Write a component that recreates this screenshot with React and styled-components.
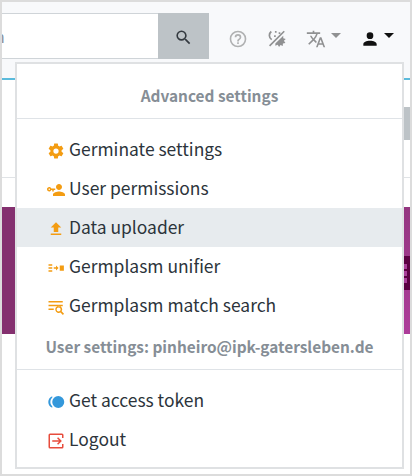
import React from "react";
import styled, { createGlobalStyle } from "styled-components";

const Global = createGlobalStyle`
  *{box-sizing:border-box}
  body{margin:0;background:#fff;font-family:"Noto Sans CJK SC","Noto Sans",sans-serif;color:#2c343b}
`;
const Frame = styled.div`
  position:relative;width:412px;height:476px;overflow:hidden;background:#fff;
  border:2px solid #dcdcdc;display:flex;flex-direction:column;
`;
const TopBar = styled.header`
  flex:none;height:78px;background:#f8f9fb;border-bottom:2px solid #5bbbdc;
  display:flex;align-items:flex-start;padding-top:11px;
`;
const SearchField = styled.div`
  width:156px;height:46px;background:#fff;border:1px solid #cfd4d8;border-width:1px 0;
  display:flex;align-items:center;overflow:hidden;font-size:16px;color:#8b929b;
  span{margin-left:-7px}
`;
const SearchButton = styled.div`
  width:51px;height:46px;background:#bdc3c7;display:flex;align-items:center;justify-content:center;
  padding-top:3px;color:#343a40;
`;
const Tools = styled.nav`
  height:51px;display:flex;align-items:center;margin-left:19px;color:#909192;
`;
const Tool = styled.div`
  display:flex;align-items:center;width:${p => p.$w}px;color:${p => p.$color || "inherit"};
  svg{flex:none}
`;
const Caret = styled.i`
  border:5px solid transparent;border-top-color:currentColor;border-bottom:0;
  margin:0 0 7px ${p => p.$gap}px;
`;
const Subheader = styled.div`
  flex:none;height:98px;border-bottom:1px solid #e0e3e6;display:flex;justify-content:flex-end;padding-top:27px;
`;
const ScrollThumb = styled.div`width:7px;height:33px;background:#bdc3c7;`;
const Banner = styled.div`
  flex:none;height:127px;margin-top:29px;background:linear-gradient(90deg,#84306f 50%,transparent 50%),linear-gradient(#943680,#ad3c9a);
  display:flex;justify-content:flex-end;align-items:flex-start;padding-top:49px;
`;
const Badge = styled.div`
  width:8px;height:34px;background:#5b0042;display:flex;flex-direction:column;gap:2px;padding:8px 3px 0 0;
  i{height:5px;background:#a93f99}
`;
const Menu = styled.div`
  position:absolute;left:13px;top:60px;width:389px;height:407px;background:#fff;border:2px solid #dfe1e3;
  display:flex;flex-direction:column;
`;
const Heading = styled.div`
  height:${p => p.$h}px;display:flex;align-items:center;justify-content:center;
  padding:${p => p.$drop || 0}px 0 ${p => p.$lift || 0}px;
  font-size:15.4px;font-weight:700;color:#868e96;white-space:nowrap;
`;
const Divider = styled.div`height:1px;background:#dfe3e7;margin-bottom:${p => p.$gap}px;`;
const Item = styled.div`
  height:39px;display:flex;align-items:center;padding:0 0 2px 30px;background:${p => p.$active ? "#e7ebee" : "transparent"};
  font-size:17.45px;white-space:nowrap;
  svg{flex:none;margin:4px 4px 0 0;color:${p => p.$color || "#f39c12"}}
`;
const paths = {
  search: "M9.5 3A6.5 6.5 0 0 1 16 9.5c0 1.61-.59 3.09-1.56 4.23l.27.27h.79l5 5-1.5 1.5-5-5v-.79l-.27-.27A6.516 6.516 0 0 1 9.5 16 6.5 6.5 0 0 1 3 9.5 6.5 6.5 0 0 1 9.5 3m0 2C7 5 5 7 5 9.5S7 14 9.5 14 14 12 14 9.5 12 5 9.5 5Z",
  help: "M11 18h2v-2h-2v2m1-16A10 10 0 0 0 2 12a10 10 0 0 0 10 10 10 10 0 0 0 10-10A10 10 0 0 0 12 2m0 18c-4.41 0-8-3.59-8-8s3.59-8 8-8 8 3.59 8 8-3.59 8-8 8m0-14a4 4 0 0 0-4 4h2a2 2 0 0 1 4 0c0 2-3 1.75-3 5h2c0-2.25 3-2.5 3-5a4 4 0 0 0-4-4Z",
  translate: "m12.87 15.07-2.54-2.51.03-.03A17.52 17.52 0 0 0 14.07 6H17V4h-7V2H8v2H1v2h11.17C11.5 7.92 10.44 9.75 9 11.35 8.07 10.32 7.3 9.19 6.69 8h-2c.73 1.63 1.73 3.17 2.98 4.56l-5.09 5.02L4 19l5-5 3.11 3.11.76-2.04M18.5 10h-2L12 22h2l1.12-3h4.75L21 22h2l-4.5-12m-2.62 7 1.62-4.33L19.12 17h-3.24Z",
  account: "M12 4a4 4 0 0 1 4 4 4 4 0 0 1-4 4 4 4 0 0 1-4-4 4 4 0 0 1 4-4m0 10c4.42 0 8 1.79 8 4v2H4v-2c0-2.21 3.58-4 8-4Z",
  cog: "M12 15.5A3.5 3.5 0 0 1 8.5 12 3.5 3.5 0 0 1 12 8.5a3.5 3.5 0 0 1 3.5 3.5 3.5 3.5 0 0 1-3.5 3.5m7.43-2.53c.04-.32.07-.64.07-.97s-.03-.66-.07-1l2.11-1.63c.19-.15.24-.42.12-.64l-2-3.46c-.12-.22-.39-.31-.61-.22l-2.49 1c-.52-.39-1.06-.73-1.69-.98l-.37-2.65A.506.506 0 0 0 14 2h-4c-.25 0-.46.18-.5.42l-.37 2.65c-.63.25-1.17.59-1.69.98l-2.49-1c-.22-.09-.49 0-.61.22l-2 3.46c-.13.22-.07.49.12.64L4.57 11c-.04.34-.07.67-.07 1s.03.65.07.97l-2.11 1.66c-.19.15-.25.42-.12.64l2 3.46c.12.22.39.3.61.22l2.49-1.01c.52.4 1.06.74 1.69.99l.37 2.65c.04.24.25.42.5.42h4c.25 0 .46-.18.5-.42l.37-2.65c.63-.26 1.17-.59 1.69-.99l2.49 1.01c.22.08.49 0 .61-.22l2-3.46c.12-.22.07-.49-.12-.64l-2.11-1.66Z",
  permissions: "M11 10v2H9v2H7v-2H5.8c-.4 1.2-1.5 2-2.8 2-1.7 0-3-1.3-3-3s1.3-3 3-3c1.3 0 2.4.8 2.8 2H11m-8 0c-.6 0-1 .4-1 1s.4 1 1 1 1-.4 1-1-.4-1-1-1m13 4c2.7 0 8 1.3 8 4v2H8v-2c0-2.7 5.3-4 8-4m0-2c-2.2 0-4-1.8-4-4s1.8-4 4-4 4 1.8 4 4-1.8 4-4 4Z",
  upload: "M9 16v-6H5l7-7 7 7h-4v6H9m-4 4v-2h14v2H5Z",
  merge: "M2 7h5v2H2Zm0 4h5v2H2Zm0 4h5v2H2Zm7-4h3V8.8l3.4 3.2-3.4 3.2V13H9Zm8-2.5h5.5v7H17Z",
  find: "M2 4h19v2H2Zm0 5h19v2H2Zm0 5h7v2H2Zm13.5-3.5a4.7 4.7 0 0 1 4 7.3l3.2 3.2-1.5 1.5-3.2-3.2a4.7 4.7 0 1 1-2.500-8.800m0 2a2.700 2.700 0 1 0 0 5.400 2.700 2.700 0 0 0 0-5.400",
  token: "M15 4a8 8 0 1 1 0 16 8 8 0 0 1 0-16M7 4.3v2.1C3.7 8.7 3.7 15.3 7 17.6v2.1C0 17.2 0 6.8 7 4.3Z",
  logout: "M4 2h16a2 2 0 0 1 2 2v4h-2V4H4v16h16v-4h2v4a2 2 0 0 1-2 2H4a2 2 0 0 1-2-2V4a2 2 0 0 1 2-2M7 11h9l-2.600-2.600L14.800 7l5 5-5 5-1.400-1.400L16 13H7Z",
  theme: "M4.500 2.200A7 7 0 0 0 5 13.500L6.300 12A5 5 0 0 1 5.800 3.800ZM9.500 2.500h2v2h-2ZM14 4h2v2h-2ZM8.500 7.500h2v2h-2ZM20 2l1.400 1.400L3.800 21 2.400 19.600ZM19.500 8v3.200l3 .8-2.200 2.200 1.800 2.600-3 .5-.2 3-2.700-1.200-1.700 2.400-1.700-2.500-2.800 1v-2.500Z",
};
const Icon = ({ name, size = 18 }) => (
  <svg width={size} height={size} viewBox="0 0 24 24"><path fill="currentColor" fillRule="evenodd" d={paths[name]} /></svg>
);

export default function App() {
  return (
    <><Global /><Frame>
      <TopBar>
        <SearchField><span>n</span></SearchField>
        <SearchButton><Icon name="search" size={19} /></SearchButton>
        <Tools>
          <Tool $w={39} $color="#b0b1b2"><Icon name="help" size={20} /></Tool>
          <Tool $w={39}><Icon name="theme" size={20} /></Tool>
          <Tool $w={54}><Icon name="translate" size={20} /><Caret $gap={5} /></Tool>
          <Tool $w={40} $color="#111"><Icon name="account" size={20} /><Caret $gap={4} /></Tool>
        </Tools>
      </TopBar>
      <Subheader><ScrollThumb /></Subheader>
      <Banner><Badge><i /><i /><i /></Badge></Banner>
      <Menu>
        <Heading $h={54} $drop={8}>Advanced settings</Heading>
        <Divider $gap={11} />
        <Item><Icon name="cog" /><span>Germinate settings</span></Item>
        <Item><Icon name="permissions" /><span>User permissions</span></Item>
        <Item $active><Icon name="upload" /><span>Data uploader</span></Item>
        <Item><Icon name="merge" /><span>Germplasm unifier</span></Item>
        <Item><Icon name="find" /><span>Germplasm match search</span></Item>
        <Heading $h={44} $lift={3}>User settings: pinheiro@ipk-gatersleben.de</Heading>
        <Divider $gap={11} />
        <Item $color="#3498db"><Icon name="token" /><span>Get access token</span></Item>
        <Item $color="#e74c3c"><Icon name="logout" /><span>Logout</span></Item>
      </Menu>
    </Frame></>
  );
}
